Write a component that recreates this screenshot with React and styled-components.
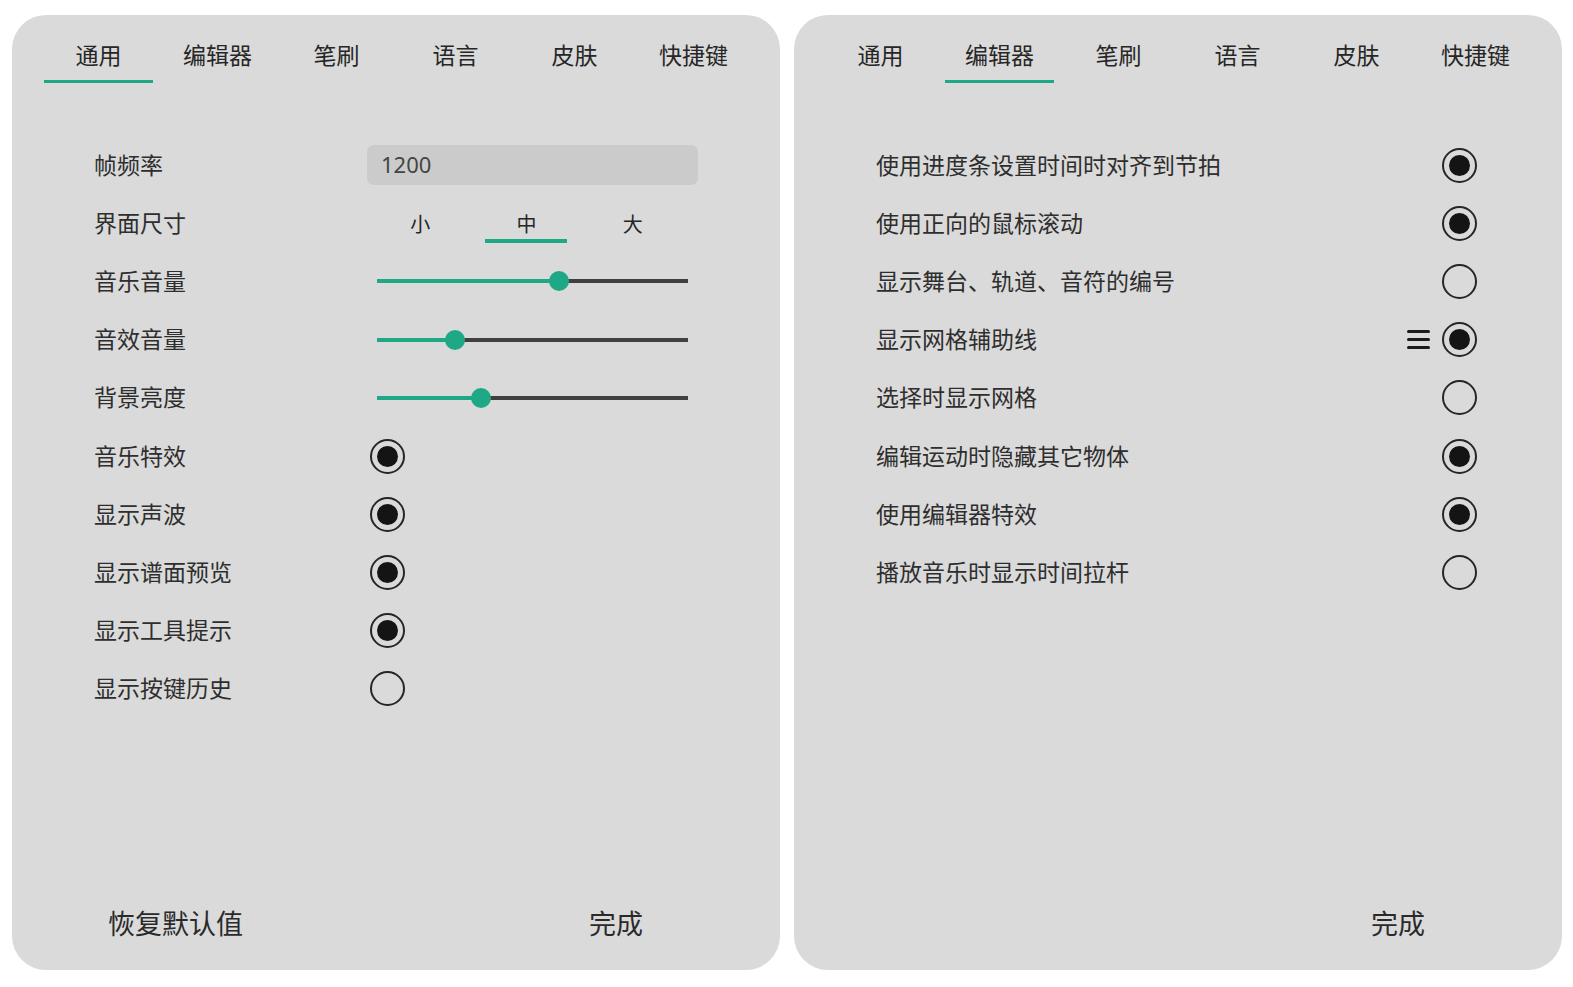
import styled, { createGlobalStyle } from 'styled-components';

const GREEN = '#1fa886';

const GlobalStyle = createGlobalStyle`
	html, body {
		margin: 0;
		padding: 0;
		background: #ffffff;
	}
	body {
		font-family: "Noto Sans CJK SC", "Noto Sans", sans-serif;
		color: #2e2e2e;
	}
`;

const TABS = ['通用', '编辑器', '笔刷', '语言', '皮肤', '快捷键'];

const generalToggles = [
	{ label: '音乐特效', on: true },
	{ label: '显示声波', on: true },
	{ label: '显示谱面预览', on: true },
	{ label: '显示工具提示', on: true },
	{ label: '显示按键历史', on: false },
];

const editorToggles = [
	{ label: '使用进度条设置时间时对齐到节拍', on: true },
	{ label: '使用正向的鼠标滚动', on: true },
	{ label: '显示舞台、轨道、音符的编号', on: false },
	{ label: '显示网格辅助线', on: true, menu: true },
	{ label: '选择时显示网格', on: false },
	{ label: '编辑运动时隐藏其它物体', on: true },
	{ label: '使用编辑器特效', on: true },
	{ label: '播放音乐时显示时间拉杆', on: false },
];

const Tabs = ({ active }) => (
	<TabBar>
		{TABS.map((t, i) => (
			<Tab key={t}>
				<TabLabel>{t}</TabLabel>
				<Underline $active={i === active} />
			</Tab>
		))}
	</TabBar>
);

const Radio = ({ on, className }) => (
	<RadioRing className={className}>{on && <RadioDot />}</RadioRing>
);

const Slider = ({ value }) => (
	<SliderWrap>
		<Track>
			<Fill style={{ width: `${value * 100}%` }} />
			<Thumb style={{ left: `${value * 100}%` }} />
		</Track>
	</SliderWrap>
);

const GeneralPanel = () => (
	<Panel>
		<Tabs active={0} />
		<Content>
			<Row>
				<Label>帧频率</Label>
				<Input>1200</Input>
			</Row>
			<Row>
				<Label>界面尺寸</Label>
				<SizeGroup>
					{['小', '中', '大'].map((s) => (
						<SizeOption key={s}>
							<SizeText>{s}</SizeText>
							<SizeLine $active={s === '中'} />
						</SizeOption>
					))}
				</SizeGroup>
			</Row>
			<Row>
				<Label>音乐音量</Label>
				<Slider value={0.584} />
			</Row>
			<Row>
				<Label>音效音量</Label>
				<Slider value={0.251} />
			</Row>
			<Row>
				<Label>背景亮度</Label>
				<Slider value={0.334} />
			</Row>
			{generalToggles.map((t) => (
				<Row key={t.label}>
					<Label>{t.label}</Label>
					<LeftRadio on={t.on} />
				</Row>
			))}
		</Content>
		<Footer>
			<FooterBtn>恢复默认值</FooterBtn>
			<FooterBtn>完成</FooterBtn>
		</Footer>
	</Panel>
);

const EditorPanel = () => (
	<Panel>
		<Tabs active={1} />
		<Content>
			{editorToggles.map((t) => (
				<EditorRow key={t.label}>
					<EditorLabel>{t.label}</EditorLabel>
					{t.menu && (
						<MenuIcon>
							<span />
							<span />
							<span />
						</MenuIcon>
					)}
					<Radio on={t.on} />
				</EditorRow>
			))}
		</Content>
		<Footer>
			<FooterBtn $right>完成</FooterBtn>
		</Footer>
	</Panel>
);

export default function App() {
	return (
		<>
			<GlobalStyle />
			<Page>
				<GeneralPanel />
				<EditorPanel />
			</Page>
		</>
	);
}

const Page = styled.div`
	display: flex;
	gap: 14px;
	padding: 15px 0 0 12px;
`;

const Panel = styled.div`
	width: 768px;
	height: 955px;
	background: #dadada;
	border-radius: 34px;
	display: flex;
	flex-direction: column;
	overflow: hidden;
`;

const TabBar = styled.div`
	display: flex;
	padding: 23px 27px 0;
`;

const Tab = styled.div`
	flex: 1;
	display: flex;
	flex-direction: column;
	align-items: center;
`;

const TabLabel = styled.div`
	font-size: 23px;
	line-height: 32px;
	color: #262626;
`;

const Underline = styled.div`
	width: 109px;
	height: 3px;
	margin-top: 10px;
	background: ${(p) => (p.$active ? GREEN : 'transparent')};
`;

const Content = styled.div`
	padding-top: 53px;
	display: flex;
	flex-direction: column;
`;

const Row = styled.div`
	height: 58.2px;
	display: flex;
	align-items: center;
	padding-left: 82px;
`;

const Label = styled.div`
	width: 273px;
	flex: none;
	font-size: 23px;
	padding-bottom: 3px;
	color: #2e2e2e;
`;

const Input = styled.div`
	width: 331px;
	height: 40px;
	box-sizing: border-box;
	padding: 0 0 2px 14px;
	display: flex;
	align-items: center;
	background: #cbcbcb;
	border-radius: 7px;
	font-family: "Noto Sans", sans-serif;
	font-size: 22px;
	color: #444;
`;

const SizeGroup = styled.div`
	display: flex;
`;

const SizeOption = styled.div`
	width: 106.3px;
	display: flex;
	flex-direction: column;
	align-items: center;
	padding-top: 7px;
`;

const SizeText = styled.div`
	font-size: 20px;
	line-height: 28px;
	color: #262626;
`;

const SizeLine = styled.div`
	width: 82px;
	height: 4px;
	margin-top: 1px;
	background: ${(p) => (p.$active ? GREEN : 'transparent')};
`;

const SliderWrap = styled.div`
	width: 331px;
	padding: 0 10px;
	box-sizing: border-box;
`;

const Track = styled.div`
	position: relative;
	height: 4px;
	background: #404040;
`;

const Fill = styled.div`
	height: 100%;
	background: ${GREEN};
`;

const Thumb = styled.div`
	position: absolute;
	top: 50%;
	width: 20px;
	height: 20px;
	border-radius: 50%;
	background: ${GREEN};
	transform: translate(-50%, -50%);
`;

const RadioRing = styled.div`
	width: 35px;
	height: 35px;
	box-sizing: border-box;
	border: 2px solid #262626;
	border-radius: 50%;
	display: flex;
	align-items: center;
	justify-content: center;
	flex: none;
`;

const LeftRadio = styled(Radio)`
	margin-left: 3px;
`;

const RadioDot = styled.div`
	width: 21px;
	height: 21px;
	border-radius: 50%;
	background: #141414;
`;

const EditorRow = styled(Row)`
	padding-right: 85px;
`;

const EditorLabel = styled.div`
	flex: 1;
	font-size: 23px;
	padding-bottom: 3px;
	color: #2e2e2e;
`;

const MenuIcon = styled.div`
	display: flex;
	flex-direction: column;
	gap: 5px;
	margin-right: 12px;
	span {
		display: block;
		width: 23px;
		height: 3px;
		border-radius: 2px;
		background: #1a1a1a;
	}
`;

const Footer = styled.div`
	margin-top: auto;
	display: flex;
	justify-content: space-between;
	padding: 0 137px 27px 96px;
`;

const FooterBtn = styled.div`
	font-size: 27px;
	line-height: 40px;
	color: #2a2a2a;
	margin-left: ${(p) => (p.$right ? 'auto' : '0')};
`;
